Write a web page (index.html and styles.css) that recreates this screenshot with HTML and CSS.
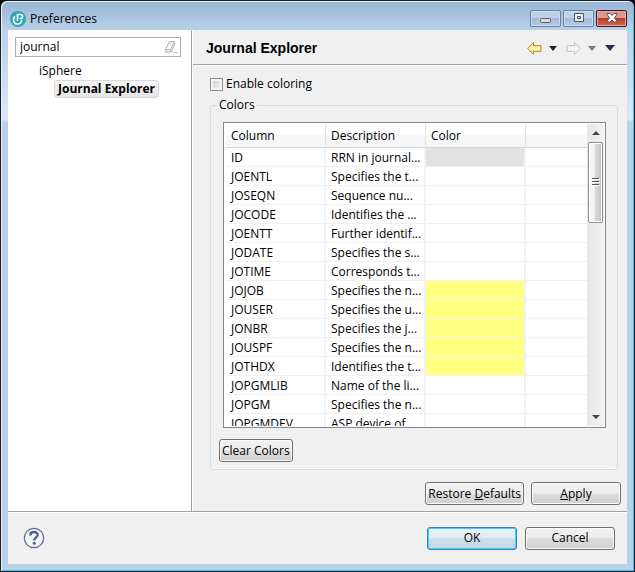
FILE: index.html
```html
<!DOCTYPE html>
<html lang="en">
<head>
<meta charset="utf-8">
<title>Preferences</title>
<link rel="stylesheet" href="styles.css">
</head>
<body>
<div class="window">
  <header class="titlebar">
    <svg class="app-icon" width="16" height="16" viewBox="0 0 16 16" aria-hidden="true">
      <circle cx="8" cy="8" r="8" fill="#2da5b9"/>
      <path d="M5 5.500C2.500 7.500 3 13 7.500 13C10.500 13 12 11 11.500 9M7.500 10V3.500H10.500C13.200 3.500 13.200 7.500 10.500 7.500H9.500" fill="none" stroke="#e9fafc" stroke-width="1.700"/>
    </svg>
    <span class="window-title">Preferences</span>
    <div class="window-controls">
      <button class="win-btn" type="button" aria-label="Minimize">
        <svg width="12" height="12" viewBox="0 0 12 12"><rect x="0.500" y="6.500" width="10" height="4" rx="1" fill="#dcdcdc" stroke="#5b6068"/></svg>
      </button>
      <button class="win-btn" type="button" aria-label="Maximize">
        <svg width="12" height="12" viewBox="0 0 12 12"><path d="M1.500 1.500h9v8h-9zM4.500 4.500v2h3v-2z" fill="#f4f4f4" fill-rule="evenodd" stroke="#4c5467"/></svg>
      </button>
      <button class="win-btn win-close" type="button" aria-label="Close">
        <svg width="12" height="12" viewBox="0 0 12 12"><path d="M1 1.500h3l2 2 2-2h3v1L8.500 6 11 9v1H8L6 8l-2 2H1V9l2.500-3L1 2.500z" fill="#fff" stroke="#5c4b5a" stroke-width="1"/></svg>
      </button>
    </div>
  </header>

  <div class="client">
    <main class="split">
      <nav class="sidebar">
        <div class="filter">
          <input class="filter-input" type="text" value="journal" aria-label="Filter">
          <button class="filter-clear" type="button" aria-label="Clear filter">
            <svg width="14" height="14" viewBox="0 0 14 14"><path d="M5.500 1.500h5v3l-3 7.500H1.500V9.500zM1.500 9.500h5l4-8M6.500 9.500V12M9.500 12.500h4" fill="#eee" stroke="#b4b4b4"/></svg>
          </button>
        </div>
        <ul class="tree">
          <li><a class="tree-item" href="#">iSphere</a>
            <ul class="tree-children">
              <li><a class="tree-item selected" href="#">Journal Explorer</a></li>
            </ul>
          </li>
        </ul>
      </nav>

      <section class="page">
        <div class="page-header">
          <h1 class="page-title">Journal Explorer</h1>
          <div class="page-nav">
            <button class="nav-btn arrow" type="button" aria-label="Back"><svg width="15" height="13" viewBox="0 0 15 13"><path d="M.7 6.500 6.500.7v3h7.500v5.600H6.500v3z" fill="#fff0b4" stroke="#bf8516" stroke-linejoin="round"/></svg></button>
            <button class="nav-btn drop" type="button" aria-label="Back history"><svg width="8" height="5" viewBox="0 0 8 5"><path d="M0 0h8L4 5z" fill="#222"/></svg></button>
            <button class="nav-btn arrow" type="button" aria-label="Forward"><svg width="15" height="13" viewBox="0 0 15 13"><path d="M14.300 6.500 8.500.7v3H1v5.600h7.500v3z" fill="#f4f4f2" stroke="#c3c3bd" stroke-linejoin="round"/></svg></button>
            <button class="nav-btn drop" type="button" aria-label="Forward history"><svg width="8" height="5" viewBox="0 0 8 5"><path d="M0 0h8L4 5z" fill="#777"/></svg></button>
            <button class="nav-btn menu" type="button" aria-label="Menu"><svg width="10" height="6" viewBox="0 0 10 6"><path d="M0 0h10L5 6z" fill="#2b2858"/></svg></button>
          </div>
        </div>

        <div class="page-body">
          <label class="check"><input class="check-box" type="checkbox"><span>Enable coloring</span></label>
          <fieldset class="group">
            <legend class="group-title">Colors</legend>
            <div class="table-box">
              <div class="table-view">
                <table class="grid">
                  <colgroup><col class="col-data"><col class="col-data"><col class="col-data"><col></colgroup>
                  <thead><tr><th>Column</th><th>Description</th><th>Color</th><th></th></tr></thead>
                  <tbody>
                    <tr><td>ID</td><td>RRN in journal...</td><td class="swatch gray"></td><td></td></tr>
                    <tr><td>JOENTL</td><td>Specifies the t...</td><td></td><td></td></tr>
                    <tr><td>JOSEQN</td><td>Sequence nu...</td><td></td><td></td></tr>
                    <tr><td>JOCODE</td><td>Identifies the ...</td><td></td><td></td></tr>
                    <tr><td>JOENTT</td><td>Further identif...</td><td></td><td></td></tr>
                    <tr><td>JODATE</td><td>Specifies the s...</td><td></td><td></td></tr>
                    <tr><td>JOTIME</td><td>Corresponds t...</td><td></td><td></td></tr>
                    <tr><td>JOJOB</td><td>Specifies the n...</td><td class="swatch yellow"></td><td></td></tr>
                    <tr><td>JOUSER</td><td>Specifies the u...</td><td class="swatch yellow"></td><td></td></tr>
                    <tr><td>JONBR</td><td>Specifies the j...</td><td class="swatch yellow"></td><td></td></tr>
                    <tr><td>JOUSPF</td><td>Specifies the n...</td><td class="swatch yellow"></td><td></td></tr>
                    <tr><td>JOTHDX</td><td>Identifies the t...</td><td class="swatch yellow"></td><td></td></tr>
                    <tr><td>JOPGMLIB</td><td>Name of the li...</td><td></td><td></td></tr>
                    <tr><td>JOPGM</td><td>Specifies the n...</td><td></td><td></td></tr>
                    <tr><td>JOPGMDEV</td><td>ASP device of ...</td><td></td><td></td></tr>
                  </tbody>
                </table>
              </div>
              <div class="scrollbar" aria-hidden="true">
                <svg class="scroll-arrow" width="8" height="4" viewBox="0 0 8 4"><path d="M0 4h8L4 0z" fill="#444"/></svg>
                <div class="scroll-track"><div class="thumb"><svg width="8" height="9" viewBox="0 0 8 9"><path d="M0 .5h7M0 3.500h7M0 6.500h7" stroke="#555"/><path d="M1 1.500h7M1 4.500h7M1 7.500h7" stroke="#fff"/></svg></div></div>
                <svg class="scroll-arrow" width="8" height="4" viewBox="0 0 8 4"><path d="M0 0h8L4 4z" fill="#444"/></svg>
              </div>
            </div>
            <button class="btn" type="button">Clear Colors</button>
          </fieldset>
          <div class="page-actions">
            <button class="btn" type="button">Restore <u>D</u>efaults</button>
            <button class="btn wide" type="button"><u>A</u>pply</button>
          </div>
        </div>
      </section>
    </main>

    <footer class="footer">
      <button class="help" type="button" aria-label="Help">
        <svg width="22" height="22" viewBox="0 0 22 22"><circle cx="11" cy="11" r="9.700" fill="#f3f4f6" stroke="#596c8f" stroke-width="1.200"/><path d="M7.300 8.500C7.300 3.800 14.800 4.200 14.600 8C14.500 10.300 11.200 10.500 11.200 13.500" fill="none" stroke="#4f6490" stroke-width="2.400"/><circle cx="11.200" cy="16.200" r="1.500" fill="#4f6490"/></svg>
      </button>
      <div class="footer-actions">
        <button class="btn wide default" type="button">OK</button>
        <button class="btn wide" type="button">Cancel</button>
      </div>
    </footer>
  </div>
</div>
</body>
</html>
```

FILE: styles.css
```css
* { box-sizing: border-box; }

body {
  margin: 0;
  background: #000;
  color: #000;
  font: 12px/16px "Open Sans", "Noto Sans", sans-serif;
}

button, input { font: inherit; color: inherit; }
button { padding: 0; border: 0; background: none; }
svg { display: block; }
ul { margin: 0; padding: 0; list-style: none; }

.window {
  display: flex;
  flex-direction: column;
  min-height: 100vh;
  padding: 0 6px 6px;
  border: 1px solid #16202b;
  border-radius: 7px 7px 0 0;
  background: linear-gradient(#98b3d2, #b9d1ea 30px, #dce8f5 118px, #b9d1ea 121px);
  box-shadow: inset 1px 1px #e8f2fb, inset -1px -1px #35c9ea;
}

.titlebar {
  display: flex;
  align-items: center;
  height: 29px;
  padding: 6px 1px 0 3px;
  gap: 4px;
}
.window-title { flex: 1; }
.window-controls { display: flex; gap: 2px; padding-bottom: 1px; }
.win-btn {
  display: grid;
  place-items: center;
  width: 31px;
  height: 17px;
  border: 1px solid #67809f;
  border-radius: 2px;
  background: linear-gradient(#bdd1e8 50%, #a1bbd8 50%, #b4cbe4);
  box-shadow: inset 0 0 0 1px #cbdcef;
}
.win-close {
  border-color: #481420;
  background: linear-gradient(#dc9c8d 45%, #b83b25 50%, #d46b4a);
  box-shadow: inset 0 0 0 1px #e5aaa0;
}

.client {
  display: flex;
  flex: 1;
  flex-direction: column;
  margin: 0 1px 1px;
  background: #f0f0f0;
}
.split {
  display: grid;
  flex: 1;
  grid-template-columns: 184px 1fr;
  border-bottom: 1px solid #a0a0a0;
}

.sidebar {
  padding: 7px 10px 7px 7px;
  border-right: 1px solid #a0a0a0;
  background: #fff;
}
.filter {
  display: flex;
  align-items: center;
  height: 20px;
  padding: 0 2px 0 4px;
  border: 1px solid #abadb3;
}
.filter-input {
  flex: 1;
  min-width: 0;
  padding: 0;
  border: 0;
  outline: 0;
  background: none;
}
.tree { padding: 5px 0 0 20px; }
.tree-item {
  display: inline-block;
  height: 18px;
  padding: 0 3px;
  border: 1px solid transparent;
  border-radius: 3px;
  color: inherit;
  text-decoration: none;
}
.tree-children { padding-left: 19px; }
.tree-item.selected {
  border-color: #d9d9d9;
  background: linear-gradient(#f8f8f8, #e5e5e5);
  font-weight: bold;
}

.page { display: flex; flex-direction: column; border-left: 1px solid #fff; }
.page-header {
  display: flex;
  align-items: center;
  justify-content: space-between;
  height: 35px;
  padding: 2px 12px 0 13px;
  border-bottom: 1px solid #a0a0a0;
}
.page-title { margin: 0; font: bold 14px/20px "Liberation Sans", sans-serif; }
.page-nav { display: flex; align-items: center; }
.arrow { margin-right: 7px; }
.drop { margin-right: 9px; }

.page-body {
  display: flex;
  flex: 1;
  flex-direction: column;
  padding: 10px 6px 6px 17px;
  border-top: 1px solid #fff;
}
.check { display: flex; align-items: center; gap: 3px; }
.check-box {
  appearance: none;
  width: 13px;
  height: 13px;
  margin: 0;
  border: 1px solid #8e8f8f;
  background: linear-gradient(135deg, #c8cdd5, #f6f6f6);
  box-shadow: inset 0 0 0 2px #f4f4f4;
}

.group {
  display: flex;
  flex: 1;
  flex-direction: column;
  align-items: flex-start;
  min-width: 0;
  margin: 5px 3px 0 0;
  padding: 9px 8px 6px;
  border: 1px solid #d0dde8;
  border-radius: 3px;
  box-shadow: inset 0 -1px #fff;
}
.group-title { padding: 0 2px; margin-left: -2px; }
.table-box {
  display: flex;
  align-self: stretch;
  height: 306px;
  margin: 0 3px 11px 4px;
  padding: 1px;
  border: 1px solid #828790;
  background: #fff;
}
.table-view { flex: 1; min-width: 0; padding-left: 1px; overflow: hidden; }
.grid { width: 100%; border-collapse: separate; border-spacing: 0; table-layout: fixed; }
.col-data { width: 100px; }
.grid th {
  height: 24px;
  padding: 0 5px;
  border-right: 1px solid #dfe3e8;
  border-bottom: 1px solid #d5d5d5;
  background: linear-gradient(#fff 45%, #f5f6f8 50%);
  font-weight: normal;
  text-align: left;
}
.grid td {
  height: 19px;
  padding: 2px 0 0 5px;
  border-right: 2px solid #edf2fb;
  border-bottom: 1px solid #f0f0f0;
  white-space: nowrap;
}
.grid th:last-child, .grid td:last-child { border-right: 0; }
.swatch { background-clip: padding-box; }
.gray { background-color: #e2e2e2; }
.yellow { background-color: #ffff80; }

.scrollbar {
  display: flex;
  flex-direction: column;
  align-items: center;
  width: 17px;
  background: linear-gradient(90deg, #e6e6e6, #f3f3f3);
}
.scroll-arrow { margin: 7px 0; }
.scroll-track { flex: 1; }
.thumb {
  display: grid;
  place-items: center;
  width: 15px;
  height: 81px;
  border: 1px solid #929292;
  border-radius: 2px;
  background: linear-gradient(90deg, #f5f5f5 40%, #d8d8da 50%, #c5c6c9);
  box-shadow: inset 0 0 0 1px #fff;
}

.btn {
  height: 23px;
  padding: 0 2px;
  border: 1px solid #707070;
  border-radius: 3px;
  background: linear-gradient(#f2f2f2, #ebebeb 50%, #dddddd 50%, #cfcfcf);
  box-shadow: inset 0 0 0 1px #fafafa;
  white-space: nowrap;
}
.btn.wide { width: 90px; }
.btn.default {
  border-color: #3c7fb1;
  background: linear-gradient(#edf3f7, #dfeaf1 50%, #cfe0ea 50%, #c1d7e4);
  box-shadow: inset 0 0 0 1px #3fd0fa;
}
.page-actions {
  display: flex;
  justify-content: flex-end;
  gap: 7px;
  padding-top: 12px;
}

.footer {
  display: flex;
  align-items: center;
  justify-content: space-between;
  height: 52px;
  padding: 0 12px 1px 15px;
  border-top: 1px solid #fff;
}
.footer-actions { display: flex; gap: 8px; }
```
